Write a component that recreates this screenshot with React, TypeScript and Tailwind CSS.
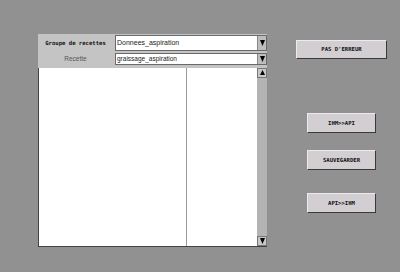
import React from 'react';

const Arrow = ({ up }: { up?: boolean }) => (
  <svg width="5" height="6" viewBox="0 0 5 6" className="block">
    {up ? <polygon points="2.5,0 5,5 0,5" fill="#000" /> : <polygon points="0,0 5,0 2.5,6" fill="#000" />}
  </svg>
);

const Btn = ({ label, className }: { label: string; className: string }) => (
  <div
    className={`flex items-center justify-center bg-[#d2ced2] border-t border-l border-[#ecebec] shadow-[1px_1px_0_#3a3a3a] text-[5.6px] font-bold text-[#111] ${className}`}
    style={{ fontFamily: '"DejaVu Sans Mono", monospace' }}
  >
    {label}
  </div>
);

export default function App() {
  return (
    <div className="w-[400px] h-[272px] bg-[#919191] flex overflow-hidden" style={{ fontFamily: '"Liberation Sans", Arial, sans-serif' }}>
      <div className="ml-[38px] mt-[34px] w-[229px] h-[213px] flex flex-col bg-[#c4c4c4]">
        <div className="flex h-[16px] mt-[1px] gap-[2px]">
          <div
            className="w-[75px] flex items-center justify-center text-[5.6px] font-bold text-[#111]"
            style={{ fontFamily: '"DejaVu Sans Mono", monospace' }}
          >
            Groupe de recettes
          </div>
          <div className="flex-1 flex bg-white border border-[#6a6a6a]">
            <div className="flex-1 flex items-center pl-[1px] text-[7px] text-[#222]">Donnees_aspiration</div>
            <div className="w-[9px] bg-[#bdbdbd] border-l border-[#888] flex items-center justify-center">
              <Arrow />
            </div>
          </div>
        </div>
        <div className="flex h-[12px] mt-[2px] gap-[2px]">
          <div className="w-[75px] flex items-center justify-center text-[6.5px] text-[#555]">Recette</div>
          <div className="flex-1 flex bg-white border border-[#6a6a6a]">
            <div className="flex-1 flex items-center pl-[1px] text-[6.5px] text-[#222]">graissage_aspiration</div>
            <div className="w-[9px] bg-[#bdbdbd] border-l border-[#888] flex items-center justify-center">
              <Arrow />
            </div>
          </div>
        </div>
        <div className="flex flex-1 mt-[3px] bg-white border-l border-b border-[#444]">
          <div className="w-[148px] border-r border-[#9a9a9a]" />
          <div className="flex-1" />
          <div className="w-[10px] bg-[#b4b4b4] flex flex-col justify-between">
            <div className="h-[10px] bg-[#c8c8c8] border border-[#777] flex items-center justify-center">
              <Arrow up />
            </div>
            <div className="h-[10px] bg-[#c8c8c8] border border-[#777] flex items-center justify-center">
              <Arrow />
            </div>
          </div>
        </div>
      </div>
      <div className="ml-[29px] flex flex-col">
        <Btn label="PAS D'ERREUR" className="mt-[40px] w-[90px] h-[18px]" />
        <Btn label="IHM>>API" className="mt-[55px] ml-[11px] w-[68px] h-[19px]" />
        <Btn label="SAUVEGARDER" className="mt-[18px] ml-[11px] w-[68px] h-[19px]" />
        <Btn label="API>>IHM" className="mt-[24px] ml-[11px] w-[68px] h-[19px]" />
      </div>
    </div>
  );
}
